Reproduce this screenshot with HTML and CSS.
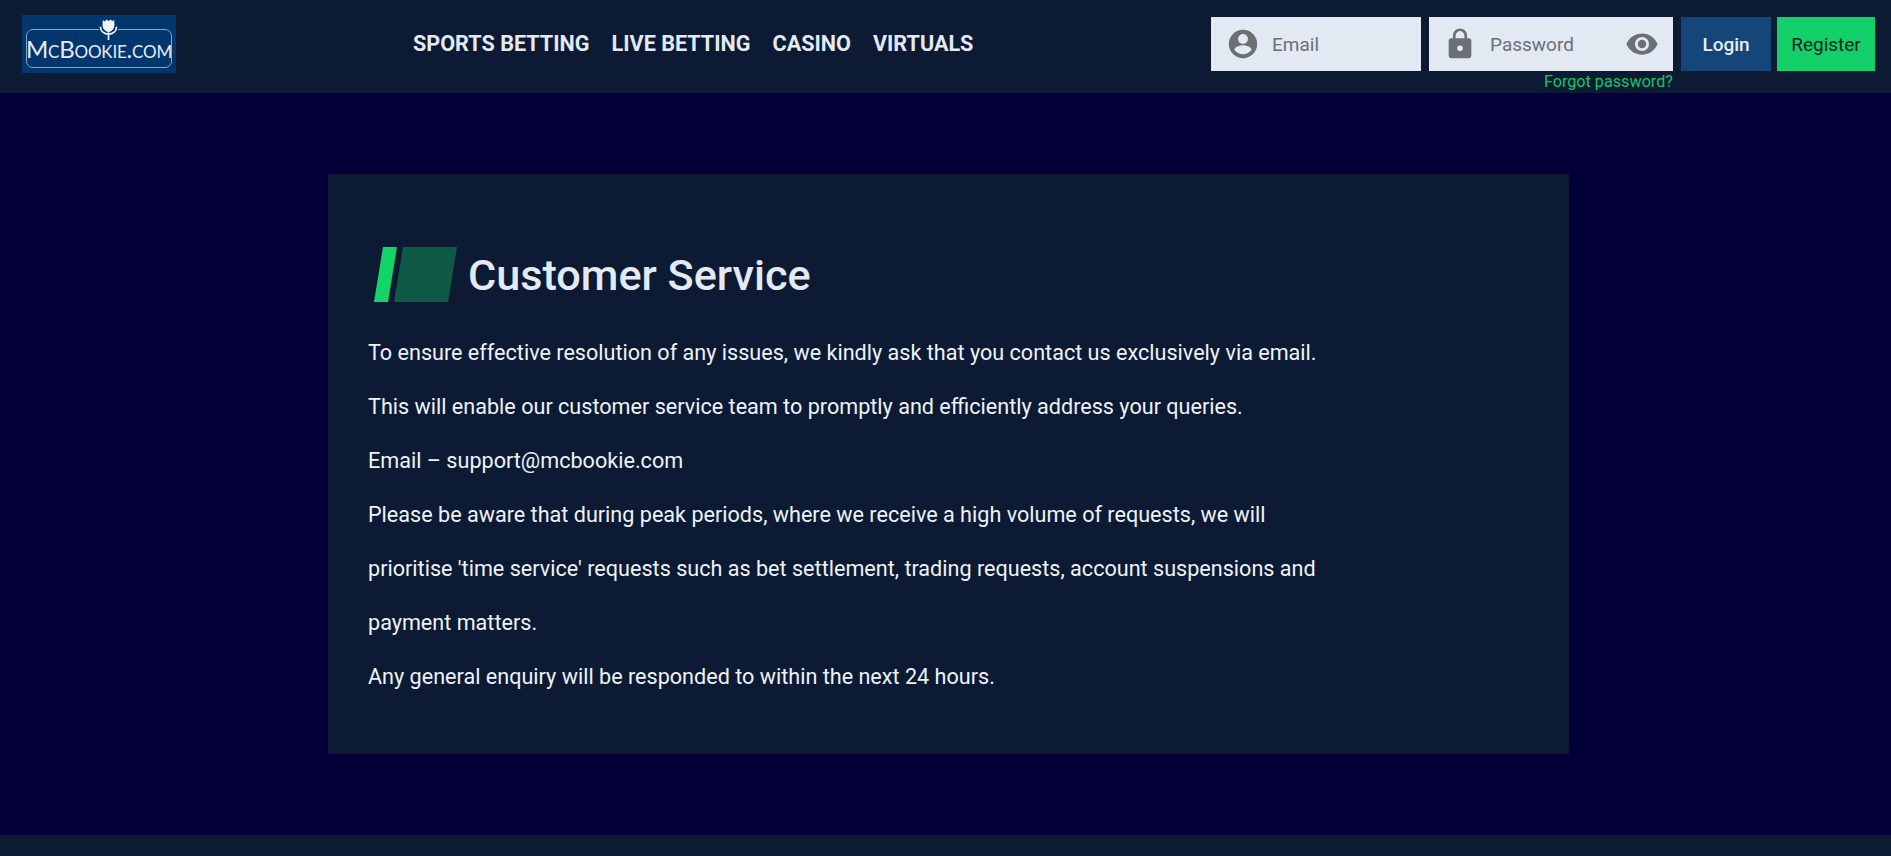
FILE: index.html
```html
<!DOCTYPE html>
<html lang="en">

<head>
    <meta charset="UTF-8">
    <title>Customer Service</title>
    <link rel="stylesheet" href="styles.css">
</head>

<body>
    <header class="topbar">
        <a class="logo" href="#">
            <span class="logo-frame">
                <span class="logo-text">McBookie.com</span>
            </span>
            <svg class="logo-thistle" viewBox="0 0 20 22" width="19" height="21">
                <path fill="#eef3f8" d="M4 1l2 1.500L8 .5l2 1.500L12 .5l2 1.500 2-1 .3 5.500c0 3-2 5-3.300 6l-3 1.500-3-1.500c-1.300-1-3.300-3-3.300-6z"/>
                <path fill="none" stroke="#eef3f8" stroke-width="1.800" d="M1.500 8c0 5 4 8 8.500 8s8.500-3 8.500-8M10 14v8"/>
            </svg>
        </a>
        <nav class="main-nav">
            <a href="#">SPORTS BETTING</a>
            <a href="#">LIVE BETTING</a>
            <a href="#">CASINO</a>
            <a href="#">VIRTUALS</a>
        </nav>
        <div class="login-area">
            <div class="field field-email">
                <svg class="field-icon" viewBox="0 0 24 24" width="34" height="34">
                    <path fill="#6c7075" d="M12 2a10 10 0 1 0 0 20 10 10 0 0 0 0-20zm0 3a3.500 3.500 0 1 1 0 7 3.500 3.500 0 0 1 0-7zm0 14.200a7.400 7.400 0 0 1-6-3.200c0-2 4-3.100 6-3.100s6 1.100 6 3.100a7.400 7.400 0 0 1-6 3.200z"/>
                </svg>
                <span class="placeholder">Email</span>
            </div>
            <div class="password-wrap">
                <div class="field field-password">
                    <svg class="field-icon" viewBox="0 0 24 24" width="34" height="34">
                        <path fill="#6c7075" d="M18 8h-1V6a5 5 0 0 0-10 0v2H6a2 2 0 0 0-2 2v10a2 2 0 0 0 2 2h12a2 2 0 0 0 2-2V10a2 2 0 0 0-2-2zm-6 9a2 2 0 1 1 0-4 2 2 0 0 1 0 4zm3.100-9H8.900V6a3.100 3.100 0 0 1 6.200 0z"/>
                    </svg>
                    <span class="placeholder">Password</span>
                    <svg class="eye-icon" viewBox="0 0 24 24" width="34" height="34">
                        <path fill="#6c7075" d="M12 4.500C7 4.500 2.700 7.600 1 12c1.700 4.400 6 7.500 11 7.500s9.300-3.100 11-7.500c-1.700-4.400-6-7.500-11-7.500zM12 17a5 5 0 1 1 0-10 5 5 0 0 1 0 10zm0-8a3 3 0 1 0 0 6 3 3 0 0 0 0-6z"/>
                    </svg>
                </div>
                <a class="forgot" href="#">Forgot password?</a>
            </div>
            <button class="btn btn-login">Login</button>
            <button class="btn btn-register">Register</button>
        </div>
    </header>

    <main class="page">
        <section class="card">
            <div class="card-title">
                <svg class="title-mark" viewBox="0 0 83 55" width="83" height="55">
                    <polygon fill="#14d468" points="9,0 23,0 14,55 0,55"/>
                    <polygon fill="#0e5a44" points="29,0 83,0 74,55 20,55"/>
                </svg>
                <h1>Customer Service</h1>
            </div>
            <p>To ensure effective resolution of any issues, we kindly ask that you contact us exclusively via email.</p>
            <p>This will enable our customer service team to promptly and efficiently address your queries.</p>
            <p>Email – support@mcbookie.com</p>
            <p>Please be aware that during peak periods, where we receive a high volume of requests, we will prioritise 'time service' requests such as bet settlement, trading requests, account suspensions and payment matters.</p>
            <p>Any general enquiry will be responded to within the next 24 hours.</p>
        </section>
    </main>

    <footer class="footer"></footer>
</body>

</html>
```

FILE: styles.css
```css
body {
    font-family: Roboto, "Liberation Sans", sans-serif;
    margin: 0;
    padding: 0;
    height: 856px;
    overflow: hidden;
    background-color: #030039;
}

a {
    text-decoration: none;
}

.topbar {
    display: flex;
    align-items: flex-start;
    height: 93px;
    background-color: #0c1a33;
}

.logo {
    position: relative;
    display: block;
    flex: none;
    width: 154px;
    height: 58px;
    margin: 15px 0 0 22px;
    background-color: #04366e;
}

.logo-thistle {
    position: absolute;
    top: 4px;
    left: 77px;
    background-color: #04366e;
}

.logo-frame {
    position: absolute;
    left: 4px;
    right: 4px;
    top: 14px;
    bottom: 5px;
    display: flex;
    align-items: center;
    justify-content: center;
    border: 1px solid #8ba4c4;
    border-radius: 7px;
}

.logo-text {
    color: #e6edf5;
    font-family: Lato, sans-serif;
    font-size: 24px;
    font-variant: small-caps;
    letter-spacing: -0.2px;
}

.main-nav {
    display: flex;
    gap: 22px;
    margin: 30px 0 0 237px;
}

.main-nav a {
    color: #e3eaf4;
    font-size: 21.6px;
    font-weight: 700;
    line-height: 27px;
}

.login-area {
    display: flex;
    align-items: flex-start;
    margin: 17px 0 0 auto;
    padding-right: 16px;
}

.field {
    display: flex;
    align-items: center;
    height: 54px;
    background-color: #e2e9f3;
}

.field-email {
    width: 210px;
    margin-right: 8px;
}

.field-password {
    width: 244px;
}

.field-icon {
    flex: none;
    margin-left: 15px;
}

.field-password .field-icon {
    margin-left: 14px;
}

.placeholder {
    margin-left: 12px;
    color: #6c7075;
    font-size: 19px;
}

.field-password .placeholder {
    margin-left: 13px;
}

.eye-icon {
    flex: none;
    margin-left: auto;
    margin-right: 14px;
}

.password-wrap {
    display: flex;
    flex-direction: column;
    align-items: flex-end;
    margin-right: 8px;
}

.forgot {
    margin-top: 1px;
    color: #16c465;
    font-size: 16.2px;
    line-height: 19px;
}

.btn {
    height: 54px;
    border: none;
    font-family: inherit;
    font-size: 19px;
    font-weight: 500;
    cursor: pointer;
}

.btn-login {
    width: 90px;
    margin-right: 6px;
    color: #e8eef6;
    background-color: #14467a;
}

.btn-register {
    width: 98px;
    color: #08261c;
    font-weight: 400;
    background-color: #14d06a;
}

.page {
    height: 742px;
    padding: 81px 0 0 328px;
    box-sizing: border-box;
}

.card {
    box-sizing: border-box;
    width: 1241px;
    height: 580px;
    padding: 73px 231px 0 40px;
    background-color: #0c1a33;
}

.card-title {
    display: flex;
    align-items: center;
    gap: 11px;
    margin-left: 6px;
    height: 55px;
}

.card-title h1 {
    margin: 0;
    padding-top: 2px;
    color: #e3eaf4;
    font-size: 43.2px;
    font-weight: 500;
}

.card p {
    margin: 0;
    color: #eef3fa;
    font-size: 21.6px;
    line-height: 54px;
}

.card-title + p {
    margin-top: 24px;
}

.footer {
    height: 21px;
    background-color: #0c1a33;
}
```
